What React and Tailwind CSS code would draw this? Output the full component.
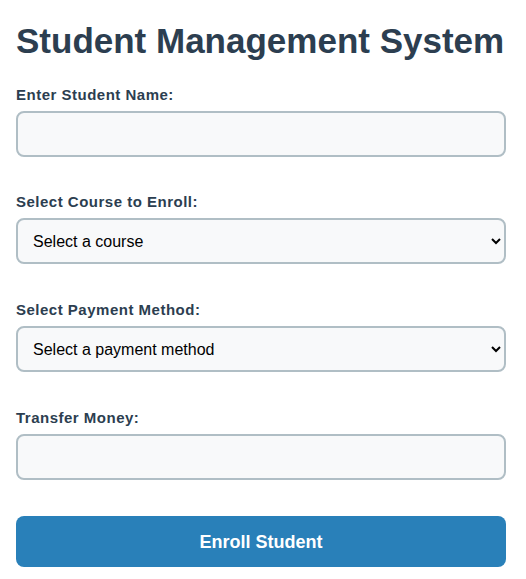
export default function App() {
  const inputClass =
    'w-full h-[46px] rounded-lg border-2 border-[#b0bec5] bg-[#f8f9fa] px-[15px] text-base text-black outline-none';
  const selectClass =
    'w-full h-[46px] rounded-lg border-2 border-[#b0bec5] bg-[#f8f9fa] pl-[11px] pr-[6px] text-base text-black outline-none';
  const labelClass = 'block text-[15px] leading-5 font-bold tracking-[0.5px] text-[#2c3e50] mb-1.5';

  return (
    <div className="min-h-screen bg-white pl-4 pr-5 pt-[20px] font-['Liberation_Sans',Arial,sans-serif]">
      <h1 className="text-[35px] font-bold leading-[41px] text-[#2c3e50]">Student Management System</h1>

      <form className="mt-[24px]">
        <label className={labelClass}>Enter Student Name:</label>
        <input type="text" className={inputClass} />

        <label className={`${labelClass} mt-[35px]`}>Select Course to Enroll:</label>
        <select className={selectClass} defaultValue="">
          <option value="">Select a course</option>
          <option value="math">Mathematics</option>
          <option value="cs">Computer Science</option>
        </select>

        <label className={`${labelClass} mt-[36px]`}>Select Payment Method:</label>
        <select className={selectClass} defaultValue="">
          <option value="">Select a payment method</option>
          <option value="card">Credit Card</option>
          <option value="bank">Bank Transfer</option>
        </select>

        <label className={`${labelClass} mt-[36px]`}>Transfer Money:</label>
        <input type="text" className={inputClass} />

        <button
          type="button"
          className="mt-[36px] w-full h-[51px] rounded-lg bg-[#2980b9] text-lg font-bold text-white"
        >
          Enroll Student
        </button>
      </form>
    </div>
  );
}
